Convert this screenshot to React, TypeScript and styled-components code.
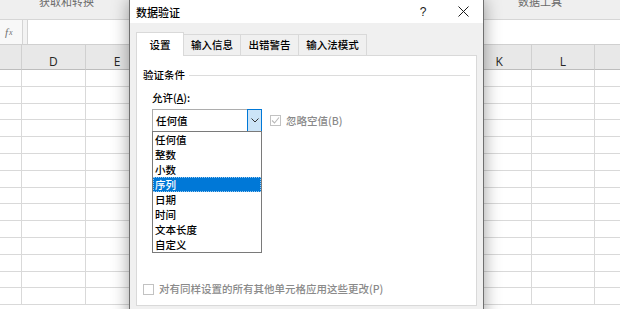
import React from 'react'
import styled, { createGlobalStyle } from 'styled-components'

const GlobalStyle = createGlobalStyle`
  html, body {
    margin: 0;
    padding: 0;
    background: #fff;
    overflow: hidden;
  }
  body {
    font-family: 'Noto Sans CJK SC', 'Noto Sans', sans-serif;
  }
`

const Page = styled.div`
    position: relative;
    width: 620px;
    height: 309px;
    overflow: hidden;
    background: #fff;
`

const Ribbon = styled.div`
    height: 20px;
    display: grid;
    grid-template-columns: 133px 1fr 140px 10px;
    background: #efefef;
    border-bottom: 1px solid #d6d6d6;
    box-sizing: border-box;
    overflow: hidden;
`

const GroupName = styled.div<{ $col: number }>`
    grid-column: ${(p) => p.$col};
    text-align: center;
    font-size: 11px;
    line-height: 12px;
    margin-top: -5px;
    color: #6a6a6a;
`

const FormulaBar = styled.div`
    height: 25px;
    display: flex;
    gap: 4px;
    background: #f3f3f3;
    border-bottom: 1px solid #d0d0d0;
    box-sizing: border-box;
`

const FxBox = styled.div`
    width: 23px;
    display: flex;
    align-items: center;
    padding-left: 5px;
    box-sizing: border-box;
    background: #f8f8f8;
    border-right: 1px solid #d4d4d4;
    font-family: 'Liberation Serif', serif;
    font-style: italic;
    font-size: 11px;
    color: #707070;

    sub {
        font-size: 8px;
        vertical-align: baseline;
        margin-left: 1px;
    }
`

const FormulaInput = styled.div`
    flex: 1;
    background: #fff;
    border-left: 1px solid #d4d4d4;
`

const Sheet = styled.div`
    display: grid;
    grid-template-columns: repeat(11, 63.7px);
    grid-template-rows: 25px;
    grid-auto-rows: 16.8px;
    margin-left: -41.7px;
`

const ColHead = styled.div`
    display: flex;
    align-items: flex-end;
    justify-content: center;
    box-sizing: border-box;
    background: #e8e8e8;
    border-right: 1px solid #d0d0d0;
    border-bottom: 1px solid #bdbdbd;
    font-family: 'Open Sans', 'Liberation Sans', sans-serif;
    font-size: 12px;
    line-height: 15px;
    color: #262626;
`

const Cell = styled.div`
    box-sizing: border-box;
    border-right: 1px solid #d9d9d9;
    border-bottom: 1px solid #d9d9d9;
`

const Dialog = styled.div`
    position: absolute;
    left: 129px;
    top: 0;
    width: 355px;
    height: 330px;
    display: flex;
    flex-direction: column;
    box-sizing: border-box;
    background: #f0f0f0;
    border: 1px solid #6f6f6f;
    border-top: none;
    box-shadow: 0 0 16px rgba(0, 0, 0, 0.38);
    font-weight: 500;
`

const TitleBar = styled.div`
    height: 23px;
    display: flex;
    align-items: center;
    padding-left: 6px;
    background: #fff;
    font-size: 11px;
    color: #000;
`

const Title = styled.div`
    flex: 1;
    line-height: 14px;
`

const TitleButton = styled.div`
    width: 40px;
    height: 23px;
    display: flex;
    align-items: center;
    justify-content: center;
    font-family: 'Liberation Sans', sans-serif;
    font-size: 12px;
    color: #1a1a1a;
`

const Body = styled.div`
    flex: 1;
    padding: 9px 6px 0 6px;
`

const Tabs = styled.div`
    height: 23px;
    display: flex;
    align-items: flex-end;
`

const Tab = styled.div<{ $w: number; $active?: boolean }>`
    width: ${(p) => p.$w}px;
    height: ${(p) => (p.$active ? 24 : 21)}px;
    margin-bottom: ${(p) => (p.$active ? -1 : 0)}px;
    margin-left: -1px;
    position: relative;
    z-index: ${(p) => (p.$active ? 2 : 1)};
    display: flex;
    align-items: center;
    justify-content: center;
    box-sizing: border-box;
    background: ${(p) => (p.$active ? '#fff' : '#f0f0f0')};
    border: 1px solid #d9d9d9;
    border-bottom: none;
    font-size: 10.5px;
    line-height: 14px;
    color: #000;

    &:first-child {
        margin-left: 0;
    }
`

const Panel = styled.div`
    height: 251px;
    display: flex;
    flex-direction: column;
    box-sizing: border-box;
    padding: 11px 6px 8px 6px;
    background: #fff;
    border: 1px solid #d9d9d9;
    position: relative;
    z-index: 1;
`

const GroupHeader = styled.div`
    display: flex;
    align-items: center;
    gap: 4px;
    font-size: 10.5px;
    line-height: 16px;
    color: #000;

    &::after {
        content: '';
        flex: 1;
        height: 1px;
        background: #dcdcdc;
    }
`

const FieldLabel = styled.div`
    margin: 7px 0 0 9px;
    font-size: 10.5px;
    line-height: 16px;
    color: #000;

    u {
        text-decoration: underline;
        text-underline-offset: 1px;
    }
`

const ComboRow = styled.div`
    display: flex;
    align-items: center;
    margin: 3px 0 0 9px;
`

const Combo = styled.div`
    position: relative;
    width: 110px;
    height: 23px;
    display: flex;
    align-items: center;
    box-sizing: border-box;
    padding-left: 3px;
    background: #fff;
    border: 1px solid #adadad;
    font-size: 10.5px;
    line-height: 15px;
    color: #000;
`

const ComboValue = styled.div`
    flex: 1;
`

const ComboButton = styled.div`
    align-self: stretch;
    width: 15px;
    margin: -1px -1px -1px 0;
    display: flex;
    align-items: center;
    justify-content: center;
    box-sizing: border-box;
    background: #cce4f7;
    border: 1px solid #0078d7;
`

const DropList = styled.div`
    position: absolute;
    top: 100%;
    left: -1px;
    width: 110px;
    box-sizing: border-box;
    background: #fff;
    border: 1px solid #7a7a7a;
    z-index: 3;
`

const DropItem = styled.div<{ $active?: boolean }>`
    height: 15px;
    padding-left: 2px;
    box-sizing: border-box;
    font-size: 10.5px;
    line-height: 15px;
    color: ${(p) => (p.$active ? '#fff' : '#000')};
    background: ${(p) => (p.$active ? '#0078d7' : 'transparent')};
    outline: ${(p) => (p.$active ? '1px dotted rgba(255,255,255,0.6)' : 'none')};
    outline-offset: -1px;
`

const CheckRow = styled.div<{ $indent?: number }>`
    display: flex;
    align-items: center;
    gap: 5px;
    margin-left: ${(p) => p.$indent ?? 0}px;
    font-size: 10.5px;
    line-height: 16px;
    color: #8a8a8a;
`

const BottomRow = styled(CheckRow)`
    margin-top: auto;
`

const Box = styled.div`
    width: 11px;
    height: 11px;
    box-sizing: border-box;
    border: 1px solid #c2c2c2;
    background: #fff;
    display: flex;
    align-items: center;
    justify-content: center;
`

const columns = ['C', 'D', 'E', 'F', 'G', 'H', 'I', 'J', 'K', 'L', 'M']
const rows = Array.from({ length: 14 }, (_, i) => i)
const allowTypes = ['任何值', '整数', '小数', '序列', '日期', '时间', '文本长度', '自定义']
const tabs = [
    { label: '设置', w: 48, active: true },
    { label: '输入信息', w: 58 },
    { label: '出错警告', w: 59 },
    { label: '输入法模式', w: 69 },
]

export default function App() {
    return (
        <Page>
            <GlobalStyle />
            <Ribbon>
                <GroupName $col={1}>获取和转换</GroupName>
                <GroupName $col={3}>数据工具</GroupName>
            </Ribbon>
            <FormulaBar>
                <FxBox>
                    f<sub>x</sub>
                </FxBox>
                <FormulaInput />
            </FormulaBar>
            <Sheet>
                {columns.map((c) => (
                    <ColHead key={c}>{c}</ColHead>
                ))}
                {rows.map((r) =>
                    columns.map((c) => <Cell key={`${c}${r}`} />)
                )}
            </Sheet>

            <Dialog>
                <TitleBar>
                    <Title>数据验证</Title>
                    <TitleButton>?</TitleButton>
                    <TitleButton>
                        <svg width="11" height="11" viewBox="0 0 11 11">
                            <path
                                d="M0.5 0.5 L10.5 10.5 M10.5 0.5 L0.5 10.5"
                                stroke="#1a1a1a"
                                strokeWidth="1"
                                fill="none"
                            />
                        </svg>
                    </TitleButton>
                </TitleBar>
                <Body>
                    <Tabs>
                        {tabs.map((t) => (
                            <Tab key={t.label} $w={t.w} $active={t.active}>
                                {t.label}
                            </Tab>
                        ))}
                    </Tabs>
                    <Panel>
                        <GroupHeader>验证条件</GroupHeader>
                        <FieldLabel>
                            允许(<u>A</u>):
                        </FieldLabel>
                        <ComboRow>
                            <Combo>
                                <ComboValue>任何值</ComboValue>
                                <ComboButton>
                                    <svg width="8" height="5" viewBox="0 0 8 5">
                                        <polyline
                                            points="0.5,0.5 4,4 7.5,0.5"
                                            stroke="#333"
                                            strokeWidth="1"
                                            fill="none"
                                        />
                                    </svg>
                                </ComboButton>
                                <DropList>
                                    {allowTypes.map((t) => (
                                        <DropItem key={t} $active={t === '序列'}>
                                            {t}
                                        </DropItem>
                                    ))}
                                </DropList>
                            </Combo>
                            <CheckRow $indent={8}>
                                <Box>
                                    <svg width="9" height="9" viewBox="0 0 9 9">
                                        <polyline
                                            points="1,4.5 3.5,7 8,1.5"
                                            stroke="#b8b8b8"
                                            strokeWidth="1.1"
                                            fill="none"
                                        />
                                    </svg>
                                </Box>
                                忽略空值(B)
                            </CheckRow>
                        </ComboRow>
                        <BottomRow>
                            <Box />
                            对有同样设置的所有其他单元格应用这些更改(P)
                        </BottomRow>
                    </Panel>
                </Body>
            </Dialog>
        </Page>
    )
}
